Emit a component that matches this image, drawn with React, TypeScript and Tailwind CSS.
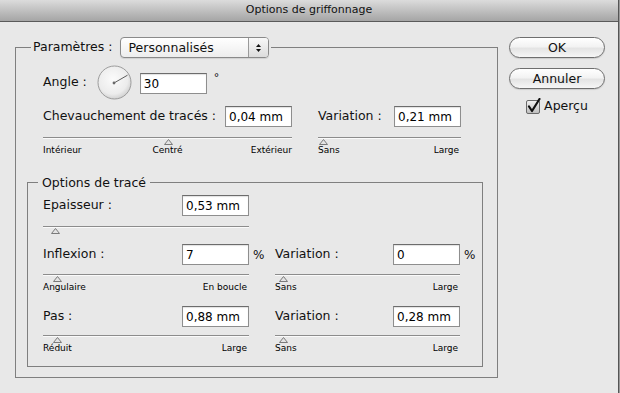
import React from "react";

type SliderProps = {
  thumb: string;
  labels?: string[];
  className?: string;
};

function Thumb() {
  return (
    <svg width="9" height="6" viewBox="0 0 9 6" className="block">
      <polygon points="4.5,0.5 8.5,5.5 0.5,5.5" fill="#e4e4e4" stroke="#7a7a7a" strokeWidth="1" />
    </svg>
  );
}

function Slider({ thumb, labels, className }: SliderProps) {
  return (
    <div className={className}>
      <div className="h-[2px] border-t border-b border-t-[#8c8c8c] border-b-[#fafafa]" />
      <div className={`h-[6px] ${thumb}`}>
        <Thumb />
      </div>
      {labels && labels.length === 3 && (
        <div className="grid grid-cols-3 text-[9px] leading-[10px] text-black">
          <span>{labels[0]}</span>
          <span className="text-center">{labels[1]}</span>
          <span className="text-right">{labels[2]}</span>
        </div>
      )}
      {labels && labels.length === 2 && (
        <div className="flex justify-between text-[9px] leading-[10px] text-black">
          <span>{labels[0]}</span>
          <span className="pr-[2px]">{labels[1]}</span>
        </div>
      )}
    </div>
  );
}

function Field({ value }: { value: string }) {
  return (
    <input
      readOnly
      value={value}
      className="h-[21px] w-[67px] shrink-0 border border-[#8e8e8e] border-t-[#6c6c6c] bg-white pl-[3px] text-[12px] text-black outline-none shadow-[inset_0_1px_1px_rgba(0,0,0,0.12)]"
    />
  );
}

function Row({ label, value, suffix }: { label: string; value: string; suffix?: string }) {
  return (
    <div className="flex h-[21px] items-center">
      <span className="flex-1 text-[12.5px]">{label}</span>
      <Field value={value} />
      {suffix && (
        <span className="w-0 overflow-visible whitespace-nowrap text-[12px]">
          <span className="ml-[4px]">{suffix}</span>
        </span>
      )}
    </div>
  );
}

function Dial() {
  return (
    <svg width="36" height="36" viewBox="0 0 36 36" className="block">
      <defs>
        <radialGradient id="dialg" cx="45%" cy="40%" r="60%">
          <stop offset="0%" stopColor="#fbfbfb" />
          <stop offset="75%" stopColor="#ececec" />
          <stop offset="100%" stopColor="#d2d2d2" />
        </radialGradient>
      </defs>
      <circle cx="17.5" cy="17.5" r="16.5" fill="url(#dialg)" stroke="#9c9c9c" strokeWidth="1" />
      <line x1="17" y1="18" x2="30.5" y2="10.2" stroke="#5e5e5e" strokeWidth="1" />
      <circle cx="17" cy="18" r="1.4" fill="#6a6a6a" />
    </svg>
  );
}

function Button({ children }: { children: React.ReactNode }) {
  return (
    <button className="h-[21px] w-[96px] rounded-full border border-[#6e6e6e] bg-[linear-gradient(to_bottom,#ffffff_0%,#f3f3f3_45%,#e4e4e4_55%,#f6f6f6_100%)] text-[12.5px] leading-[19px] text-[#111] shadow-[0_1px_1px_rgba(0,0,0,0.12)]">
      {children}
    </button>
  );
}

export default function App() {
  return (
    <div className="h-[393px] w-[620px] bg-[#9a9a9a] font-['DejaVu_Sans',sans-serif] text-[#111]">
      <div className="flex h-[393px] w-[619px] flex-col border-r border-[#555] bg-[#e8e8e8]">
        {/* barre de titre */}
        <div className="flex h-[22px] shrink-0 items-center justify-center border-b border-[#5a5a5a] bg-linear-to-b from-[#dcdcdc] to-[#a5a5a5] text-[11px] text-[#111]">
          Options de griffonnage
        </div>

        <div className="flex gap-[11px] pl-[15px]">
          <fieldset className="mt-[15px] h-[341px] w-[483px] border border-[#7f7f7f]">
            <legend className="ml-[15px] px-[2px]">
              <div className="flex h-[21px] items-center gap-[8px]">
                <span className="text-[12.5px]">Paramètres :</span>
                <div className="flex h-[21px] w-[149px] items-stretch overflow-hidden rounded-[4px] border border-[#8a8a8a] bg-linear-to-b from-white to-[#ededed] shadow-[0_1px_1px_rgba(0,0,0,0.1)]">
                  <span className="flex-1 pl-[7px] text-[12.5px] leading-[19px]">Personnalisés</span>
                  <div className="flex w-[20px] flex-col items-center justify-center gap-[2px] border-l border-[#9a9a9a] bg-linear-to-b from-[#f8f8f8] to-[#dcdcdc]">
                    <svg width="5" height="3" viewBox="0 0 5 3" className="block">
                      <polygon points="2.5,0 5,3 0,3" fill="#111" />
                    </svg>
                    <svg width="5" height="3" viewBox="0 0 5 3" className="block">
                      <polygon points="0,0 5,0 2.5,3" fill="#111" />
                    </svg>
                  </div>
                </div>
              </div>
            </legend>

            <div className="pl-[11px]">
              <div className="pl-[16px]">
                <div className="mt-[7px] flex h-[35px] items-center">
                  <span className="text-[12.5px]">Angle :</span>
                  <div className="ml-[10px]">
                    <Dial />
                  </div>
                  <div className="ml-[7px]">
                    <Field value="30" />
                  </div>
                  <span className="ml-[7px] self-start pt-[5px] text-[11px]">°</span>
                </div>

                <div className="mt-[6px] flex gap-[26px]">
                  <div className="w-[249px]">
                    <Row label="Chevauchement de tracés :" value="0,04 mm" />
                    <Slider className="mt-[10px]" thumb="pl-[121px]" labels={["Intérieur", "Centré", "Extérieur"]} />
                  </div>
                  <div className="w-[143px]">
                    <Row label="Variation :" value="0,21 mm" />
                    <Slider className="mt-[10px]" thumb="pl-[1px]" labels={["Sans", "Large"]} />
                  </div>
                </div>
              </div>

              <fieldset className="mt-[20px] h-[192px] w-[456px] border border-[#7f7f7f]">
                <legend className="ml-[10px] px-[4px] text-[12.5px] leading-[15px]">Options de tracé</legend>
                <div className="pl-[15px]">
                  <div className="mt-[5px] w-[206px]">
                    <Row label="Epaisseur :" value="0,53 mm" />
                    <Slider className="mt-[10px]" thumb="pl-[8px]" />
                  </div>

                  <div className="mt-[10px] flex gap-[26px]">
                    <div className="w-[206px]">
                      <Row label="Inflexion :" value="7" suffix="%" />
                      <Slider className="mt-[9px]" thumb="pl-[10px]" labels={["Angulaire", "En boucle"]} />
                    </div>
                    <div className="w-[185px]">
                      <Row label="Variation :" value="0" suffix="%" />
                      <Slider className="mt-[9px]" thumb="pl-[4px]" labels={["Sans", "Large"]} />
                    </div>
                  </div>

                  <div className="mt-[14px] flex gap-[26px]">
                    <div className="w-[206px]">
                      <Row label="Pas :" value="0,88 mm" />
                      <Slider className="mt-[8px]" thumb="pl-[10px]" labels={["Réduit", "Large"]} />
                    </div>
                    <div className="w-[185px]">
                      <Row label="Variation :" value="0,28 mm" />
                      <Slider className="mt-[8px]" thumb="pl-[4px]" labels={["Sans", "Large"]} />
                    </div>
                  </div>
                </div>
              </fieldset>
            </div>
          </fieldset>

          {/* boutons */}
          <div className="mt-[15px] flex w-[96px] flex-col items-center">
            <Button>OK</Button>
            <div className="mt-[8px]">
              <Button>Annuler</Button>
            </div>
            <div className="mt-[7px] flex items-center gap-[3px]">
              <svg width="15" height="16" viewBox="0 0 15 16" className="block">
                <defs>
                  <linearGradient id="cbg" x1="0" y1="0" x2="0" y2="1">
                    <stop offset="0%" stopColor="#f2f2f2" />
                    <stop offset="100%" stopColor="#bdbdbd" />
                  </linearGradient>
                </defs>
                <rect x="0.5" y="2.5" width="13" height="13" rx="1.5" fill="url(#cbg)" stroke="#6a6a6a" />
                <path d="M3 8.5 L6 13 L13.5 1" fill="none" stroke="#111" strokeWidth="2.2" strokeLinecap="round" strokeLinejoin="round" />
              </svg>
              <span className="text-[12.5px]">Aperçu</span>
            </div>
          </div>
        </div>
      </div>
    </div>
  );
}
